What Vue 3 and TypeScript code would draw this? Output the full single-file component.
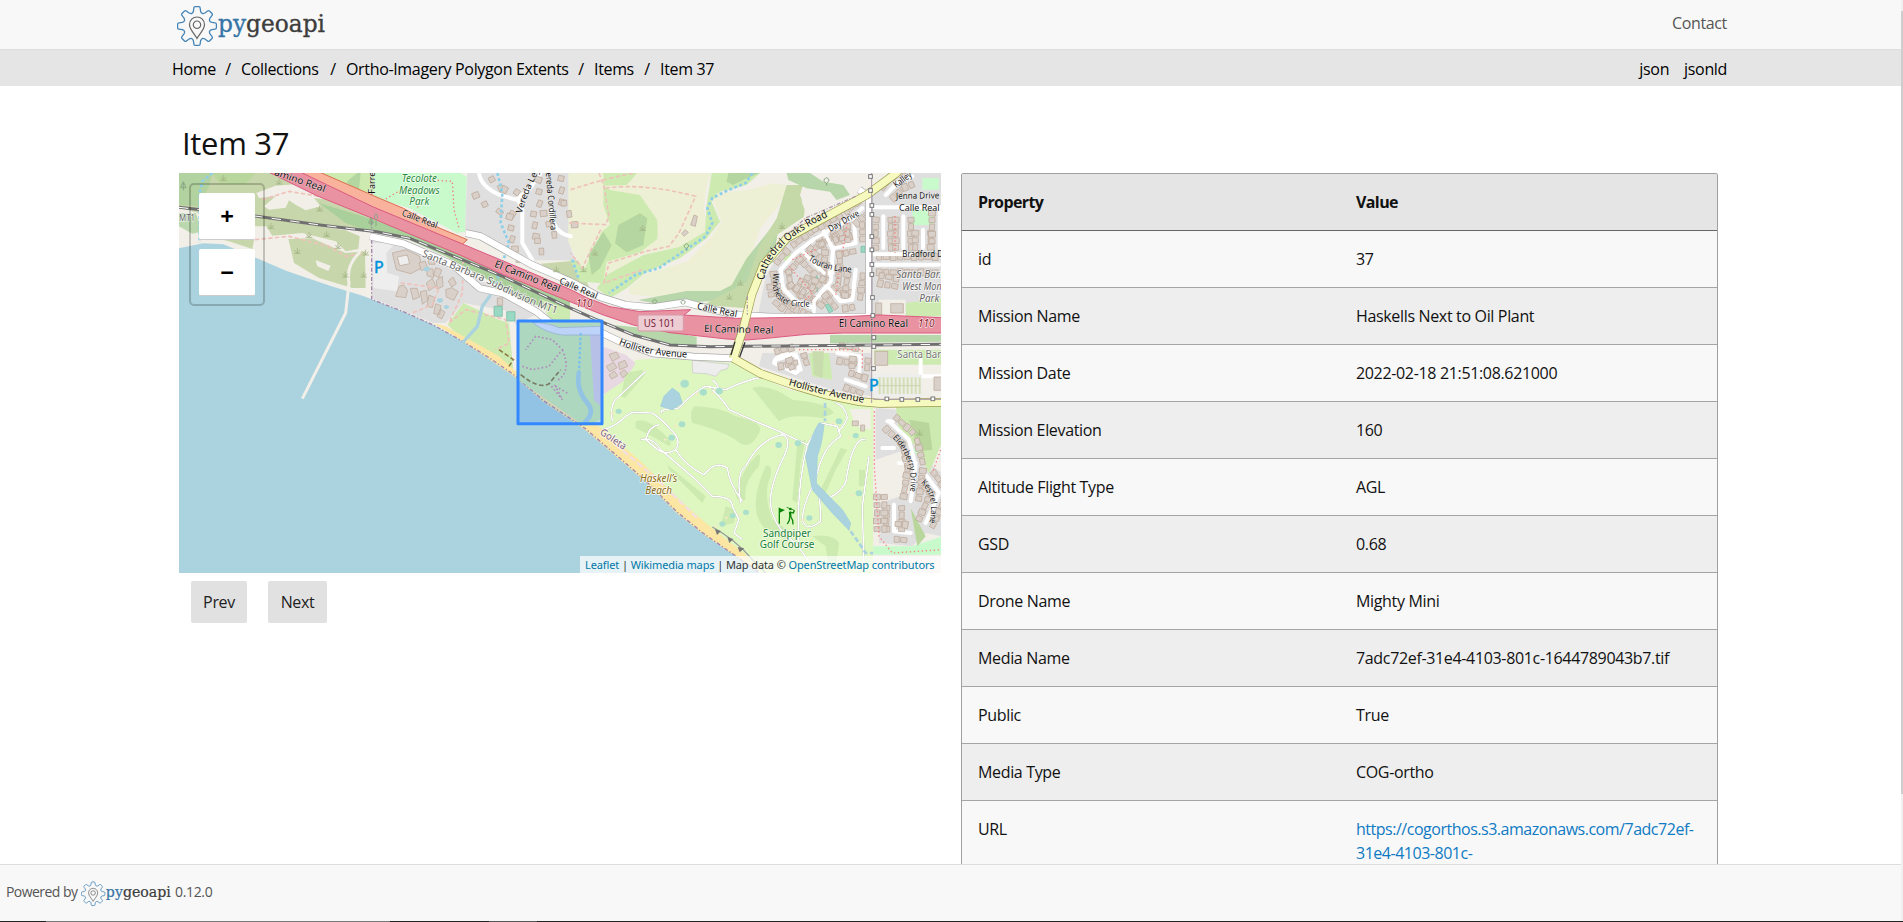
<script setup lang="ts">
interface Row { name: string; value: string; link?: boolean }
interface Label { d: string; text: string; size: number; len: number; cls: string }
interface House { x: number; y: number; a: number; w: number; h: number }

const crumbs = [
  { text: 'Home', cls: 'c-home' },
  { text: 'Collections', cls: 'c-coll' },
  { text: 'Ortho-Imagery Polygon Extents', cls: 'c-name' },
  { text: 'Items', cls: 'c-items' },
  { text: 'Item 37', cls: 'c-item' },
]

const rows: Row[] = [
  { name: 'id', value: '37' },
  { name: 'Mission Name', value: 'Haskells Next to Oil Plant' },
  { name: 'Mission Date', value: '2022-02-18 21:51:08.621000' },
  { name: 'Mission Elevation', value: '160' },
  { name: 'Altitude Flight Type', value: 'AGL' },
  { name: 'GSD', value: '0.68' },
  { name: 'Drone Name', value: 'Mighty Mini' },
  { name: 'Media Name', value: '7adc72ef-31e4-4103-801c-1644789043b7.tif' },
  { name: 'Public', value: 'True' },
  { name: 'Media Type', value: 'COG-ortho' },
  { name: 'URL', value: 'https://cogorthos.s3.amazonaws.com/7adc72ef-31e4-4103-801c-', link: true },
]

// Gear outline with eight teeth, centred on the origin
function gear(): string {
  const pts: string[] = []
  for (let i = 0; i < 8; i++) {
    const base = (i * Math.PI) / 4
    const at = (r: number, o: number) =>
      `${(r * Math.cos(base + o)).toFixed(2)} ${(r * Math.sin(base + o)).toFixed(2)}`
    pts.push(`${i ? 'L' : 'M'}${at(15.2, -0.24)}L${at(18.4, -0.17)}Q${at(19.5, -0.16)} ${at(19.5, -0.09)}L${at(19.5, 0.09)}Q${at(19.5, 0.16)} ${at(18.4, 0.17)}L${at(15.2, 0.24)}Q${at(12.2, 0.39)} ${at(15.2, 0.545)}`)
  }
  return pts.join('') + 'Z'
}
const gearPath = gear()

// Houses on both sides of a street polyline
function street(points: number[][], off = 23, step = 21, size = 15): House[] {
  const out: House[] = []
  for (let i = 0; i < points.length - 1; i++) {
    const [x1, y1] = points[i]
    const [x2, y2] = points[i + 1]
    const len = Math.hypot(x2 - x1, y2 - y1)
    const a = Math.atan2(y2 - y1, x2 - x1)
    for (let t = step / 2; t < len; t += step) {
      for (const side of [-1, 1]) {
        out.push({
          x: x1 + Math.cos(a) * t - Math.sin(a) * off * side,
          y: y1 + Math.sin(a) * t + Math.cos(a) * off * side,
          a: (a * 180) / Math.PI + ((out.length * 7) % 9) - 4,
          w: size + (out.length % 3) * 2,
          h: size + ((out.length + 1) % 3) * 3,
        })
      }
    }
  }
  return out
}
const streets: number[][][] = [
  [[1805, 290], [1850, 240], [1910, 195], [2010, 140], [2050, 105]],
  [[1805, 290], [1812, 345], [1850, 385], [1905, 405]],
  [[1870, 235], [1935, 300], [1960, 300]],
  [[1935, 175], [1962, 230], [1955, 325], [1905, 385]],
  [[1965, 225], [2030, 210], [2025, 140]],
  [[1950, 345], [1985, 385], [2020, 380], [2030, 290]],
  [[2113, 130], [2113, 225]],
  [[2173, 130], [2173, 225]],
  [[2232, 170], [2232, 225]],
  [[2282, 110], [2282, 225]],
  [[2090, 275], [2280, 275]],
  [[2120, 66], [2160, 25], [2200, 10]],
  [[1790, 560], [1850, 545], [1865, 590]],
  [[1975, 540], [2045, 550], [2040, 600]],
  [[2000, 620], [2060, 640]],
  [[2130, 745], [2190, 800], [2210, 880], [2195, 985]],
  [[2145, 995], [2145, 1075], [2195, 1080]],
  [[2240, 905], [2280, 960], [2240, 1050]],
]
const houses: House[] = [
  ...streets.flatMap((s) => street(s)),
  ...street([[1785, 330], [1790, 375], [1840, 412]], 12, 22, 15),
  ...street([[1850, 330], [1885, 350], [1900, 310]], 12, 22, 15),
  ...street([[2095, 318], [2160, 330]], 12, 22, 15),
  ...street([[2105, 960], [2105, 1080]], 11, 24, 15),
]
const westHouses: House[] = [
  ...street([[900, 30], [950, 80], [1020, 95]], 34, 38, 16),
  ...street([[1025, 110], [1035, 200], [1055, 255]], 36, 34, 16),
  ...street([[1110, 0], [1115, 90], [1160, 180]], 34, 36, 16),
]
const streetPaths = streets.map((s) => 'M' + s.map((p) => p.join(' ')).join('L'))

const hatch = Array.from({ length: 11 }, (_, i) => 2102 + i * 12)
const pylons = [
  [2074, 10], [2074, 52], [2078, 97], [2078, 124], [2078, 190], [2078, 230], [2078, 274], [2078, 304],
  [2080, 373], [2081, 427], [2084, 493], [2084, 520], [2083, 586], [2123, 677], [2168, 679], [2216, 679], [2261, 677],
]
const greens = [
  [1517, 632, 13], [1573, 658, 11], [1621, 654, 11], [1319, 715, 9], [1509, 754, 10], [1478, 794, 10],
  [1980, 745, 10], [2030, 788, 9], [1799, 816, 10], [1857, 811, 10], [2040, 961, 10], [1701, 1018, 9],
  [1661, 1028, 9], [1630, 1053, 9], [1891, 1035, 9],
]
const shrubs = [
  [133, 16], [300, 27], [422, 108], [276, 160], [390, 187], [443, 184], [477, 220], [355, 235], [560, 240],
  [499, 306], [554, 306], [1132, 290], [1391, 166], [1248, 240], [1214, 290], [1684, 330], [1651, 372], [1809, 160], [2222, 780],
]

const labels: Label[] = [
  { d: 'M284 6L442 60', text: 'amino Real', size: 30, len: 160, cls: 'road' },
  { d: 'M667 127L787 172', text: 'Calle Real', size: 27, len: 112, cls: 'road' },
  { d: 'M944 281L1160 367', text: 'El Camino Real', size: 31, len: 210, cls: 'road' },
  { d: 'M727 250Q850 300 927 332Q1035 390 1140 426', text: 'Santa Barbara Subdivision MT1', size: 31, len: 440, cls: 'rail' },
  { d: 'M0 143L50 143', text: 'MT1', size: 28, len: 48, cls: 'rail' },
  { d: 'M587 62L587 -20', text: 'Farrell', size: 27, len: 80, cls: 'road' },
  { d: 'M1028 122Q1048 50 1088 -20', text: 'Vereda Leye', size: 27, len: 158, cls: 'road' },
  { d: 'M1099 -14L1115 175', text: 'Vereda Cordillera', size: 27, len: 187, cls: 'road' },
  { d: 'M1139 330L1260 382', text: 'Calle Real', size: 27, len: 122, cls: 'road' },
  { d: 'M1553 408L1680 434', text: 'Calle Real', size: 28, len: 122, cls: 'road' },
  { d: 'M1575 477L1790 482', text: 'El Camino Real', size: 31, len: 208, cls: 'road' },
  { d: 'M1979 462L2200 462', text: 'El Camino Real', size: 31, len: 208, cls: 'road' },
  { d: 'M1191 402L1260 402', text: '110', size: 31, len: 50, cls: 'ref' },
  { d: 'M2217 461L2280 461', text: '110', size: 31, len: 50, cls: 'ref' },
  { d: 'M1319 514Q1400 550 1535 554', text: 'Hollister Avenue', size: 29, len: 210, cls: 'road' },
  { d: 'M1828 636Q1940 669 2065 691', text: 'Hollister Avenue', size: 30, len: 232, cls: 'road' },
  { d: 'M1755 322Q1770 210 1958 126', text: 'Cathedral Oaks Road', size: 32, len: 282, cls: 'road' },
  { d: 'M1954 177L2050 122', text: 'Day Drive', size: 27, len: 102, cls: 'road' },
  { d: 'M1887 262Q1950 300 2030 298', text: 'Touran Lane', size: 27, len: 137, cls: 'road' },
  { d: 'M1783 300Q1763 414 1900 400', text: 'Winchester Circle', size: 26, len: 182, cls: 'road' },
  { d: 'M2151 78L2289 76', text: 'Jenna Drive', size: 27, len: 130, cls: 'road' },
  { d: 'M2160 113L2289 113', text: 'Calle Real', size: 28, len: 122, cls: 'road' },
  { d: 'M2152 45L2206 5', text: 'Kalley', size: 27, len: 60, cls: 'road' },
  { d: 'M2170 251L2310 251', text: 'Bradford D', size: 27, len: 122, cls: 'road' },
  { d: 'M2140 795Q2206 860 2193 962', text: 'Elderberry Drive', size: 26, len: 176, cls: 'road' },
  { d: 'M2225 930Q2270 970 2250 1055', text: 'Kestrel Lane', size: 26, len: 129, cls: 'road' },
  { d: 'M1261 782L1338 834', text: 'Goleta', size: 30, len: 88, cls: 'place' },
]
const plain = [
  { x: 721, y: 26, t: 'Tecolote', len: 106, cls: 'park' },
  { x: 721, y: 62, t: 'Meadows', len: 122, cls: 'park' },
  { x: 721, y: 97, t: 'Park', len: 60, cls: 'park' },
  { x: 2219, y: 316, t: 'Santa Bar.', len: 134, cls: 'sub' },
  { x: 2229, y: 351, t: 'West Mon', len: 118, cls: 'sub' },
  { x: 2251, y: 387, t: 'Park', len: 60, cls: 'sub' },
  { x: 2221, y: 554, t: 'Santa Bar', len: 132, cls: 'grey' },
  { x: 1439, y: 926, t: 'Haskell’s', len: 112, cls: 'beach' },
  { x: 1439, y: 962, t: 'Beach', len: 80, cls: 'beach' },
  { x: 1824, y: 1091, t: 'Sandpiper', len: 144, cls: 'golf' },
  { x: 1824, y: 1126, t: 'Golf Course', len: 164, cls: 'golf' },
]
</script>

<template>
  <div class="page">
    <header class="top">
      <svg class="logo" viewBox="0 0 150 42">
        <g transform="translate(20 21)">
          <path :d="gearPath" class="gear" />
          <path class="pin" d="M0 12.5C-3 7-7.5 3.5-7.5-1.5A7.5 7.5 0 0 1 7.5-1.5C7.5 3.5 3 7 0 12.5Z" />
          <circle class="pin" cy="-1.3" r="3.7" />
        </g>
        <text class="word" x="41" y="27" textLength="107" lengthAdjust="spacingAndGlyphs"><tspan class="py">py</tspan>geoapi</text>
      </svg>
      <a class="contact">Contact</a>
    </header>
    <nav class="crumbs">
      <div class="trail">
        <template v-for="(c, i) in crumbs" :key="c.text">
          <span v-if="i" class="sep">/</span><a :class="c.cls">{{ c.text }}</a>
        </template>
      </div>
      <div class="formats"><a class="f-json">json</a><a class="f-ld">jsonld</a></div>
    </nav>

    <main>
      <h1>Item 37</h1>
      <div class="cols">
        <section class="left">
          <div class="map">
            <svg class="tiles" viewBox="0 0 2289 1200">
              <rect width="2289" height="1200" fill="#aad3df" />
              <path fill="#f2efe9" d="M0 226L73 211L133 214L223 251L323 294L453 338L553 369L578 379L673 416L763 456L853 506L933 556L1003 604L1093 683L1173 738L1218 766L1323 856L1403 926L1493 1016L1573 1081L1663 1141L1743 1200H2289V0H0Z" />
              <!-- scrub, grass and woods in the west -->
              <path fill="#c8d7ab" d="M0 0H290L470 78L590 140L570 174L228 128L228 185L220 228L150 205L85 190L60 120L0 105Z" />
              <path fill="#add19e" opacity=".8" d="M0 0H100L90 40L60 100L0 96ZM0 120H50L70 175L40 182L0 160Z" />
              <path fill="#b9d79c" d="M100 0H230L200 34L120 30Z" />
              <path fill="#f2efe9" d="M232 60L290 38L350 34L440 60L450 80L405 75L425 100L380 112L350 95L330 82L320 104L270 110L255 100L290 70L240 75Z" />
              <path fill="#c8d7ab" d="M228 132L500 172L542 190L538 228L500 235L470 205L370 180L280 188L262 160H228ZM328 198L400 196L500 240L558 235L560 345L520 345L420 315L345 270Z" />
              <path fill="#f2efe9" d="M410 262L455 278L448 294L415 280Z" />
              <path fill="#cdebb0" d="M390 0H585V75L490 48Z" />
              <path fill="#add19e" opacity=".8" d="M505 24L535 0H545L540 50L505 40Z" />
              <path fill="#a9cf9b" d="M420 90L585 140L873 246L1173 376L1173 440L1018 372L800 250L690 200L570 175L500 150Z" />
              <path fill="#c8facc" d="M585 0H845L863 12L858 176L835 180L690 105L585 72Z" />
              <!-- western homes -->
              <path fill="#e0dfdf" d="M865 0H1170V210L1190 262L1062 262L1010 235L858 178Z" />
              <path fill="#c8d7ab" d="M1085 272L1200 262L1240 370L1140 310Z" />
              <path fill="#e0dfdf" d="M578 185L650 215L770 250L850 290L990 370L1080 420L1010 455L990 415L853 390L800 450L763 450L578 375Z" />
              <path fill="#eeeeee" d="M580 210L650 210L622 240L625 300L660 310L655 355L583 345Z" />
              <path fill="#cdebb0" d="M853 390L960 440L990 450L1003 595L853 500L805 455ZM1090 380L1173 410L1173 470L1110 440Z" />
              <g class="house big">
                <path d="M640 240L680 230L722 250L728 285L695 302L652 290Z" /><path fill="#eee" d="M655 252L685 246L692 272L662 278Z" />
                <path d="M660 340l14-4 12 16-6 22-30-4zM694 346l20 0 8 26-20 8zM724 356l18-4 4 30-16 12zM750 366l18 8-8 30-16-4zM770 392l16 6-4 26-18-2zM784 408l14 10-10 20-14-8zM742 330l18-14 10 22-20 16zM772 322l18-12 2 30-18 8zM808 324l14-12 10 20-14 10zM800 350l18-6 20 12-14 26-22-10zM720 270l18-6 10 24-22 4zM744 286l18 2 2 26-20-6zM770 284l18 6-8 24-16-8zM748 262l20 0 0 12-18 0zM955 375l16 0 0 22-16 0z" />
              </g>
              <g fill="#aad3df"><ellipse cx="743" cy="288" rx="10" ry="7" /><ellipse cx="783" cy="382" rx="9" ry="7" /><ellipse cx="802" cy="402" rx="8" ry="6" /></g>
              <g fill="#99d9c4" stroke="#6fb89f" stroke-width="2"><path d="M945 400h25v30h-25zM983 416h25v28h-25z" /></g>
              <!-- northern meadows -->
              <g transform="translate(1143 -24)">
                <path fill="#eef0d5" d="M25 24H455L440 60L430 130L445 190L380 240L240 270L130 350L90 330L60 300L25 230Z" />
                <path fill="#cdebb0" d="M130 24H232L200 60L250 80L290 150L295 220L240 262L140 290L130 355L60 350L28 280L75 310L125 200L150 180L130 120Z" />
                <path fill="#eef0d5" d="M128 62L200 60L270 75L405 95L375 185L330 235L290 255L295 170L240 90L150 75Z" />
                <path fill="#cdebb0" d="M455 24H500L600 24L560 60L480 80L455 110L480 170L440 220L360 280L260 320L200 370L150 400L110 370L140 330L250 270L360 245L435 200L440 120Z" />
                <path fill="#b5d6a0" d="M175 180L240 145L262 160L250 240L200 262L165 235ZM85 270L130 200L155 240L120 310L95 330ZM505 24H600L560 40L520 60L500 50Z" />
                <path fill="#eef0d5" d="M470 85L560 75L640 55L676 60L680 80L650 130L600 190L575 270L540 365L490 378L380 378L280 395L210 388L205 370L260 325L380 290L450 220L485 170L460 110Z" />
                <path fill="#add19e" opacity=".85" d="M235 405L380 378L480 378L515 360L560 280L600 230L640 180L655 190L640 290L585 330L570 380L500 405L420 410L280 415Z" />
                <path fill="#c5d9a8" d="M680 60L740 60L725 110L740 150L650 210L610 280L585 350L560 430L430 420L560 350L600 240L650 160Z" />
                <path fill="#f2efe9" d="M740 24H880L920 60L910 80L730 165L735 130L720 90Z" />
                <path fill="#add19e" opacity=".85" d="M680 24H750L790 50L850 60L870 90L830 105L810 80L740 70L685 45ZM160 480L260 490L410 515L410 540L320 540L220 505ZM810 510L1143 510V530L810 535Z" />
                <path class="house" d="M402 150l10 4-6 30-14-4zM375 194l10 8-12 12-8-8z" />
              </g>
              <!-- eastern homes -->
              <path fill="#e0dfdf" d="M1740 410L1760 310L1820 210L1930 150L2060 75L2100 30L2130 0H2289V430L1740 425ZM1750 540H2076V670L1960 650L1740 580Z" />
              <path fill="#c8facc" d="M2230 15h50v35h-50zM2200 110h64v46h-64z" />
              <path fill="#cdebb0" d="M2180 390l109 -15v55h-109zM2085 530H2289V575H2085ZM1890 540l60 0 10 80-60-10zM1810 240l20-10 10 30-20 10z" />
              <path fill="#c9dcae" d="M1900 535l35 0 -5 80-25-10z" />
              <path fill="#f2efe9" d="M2100 380h80v50h-80z" />
              <g fill="#99d9c4" stroke="#6fb89f" stroke-width="2"><path d="M1900 327h16v28h-16zM1938 396l12-4 12 22-12 6zM2046 220h12v18h-12z" /><circle cx="1908" cy="316" r="9" /></g>
              <!-- golf course -->
              <path fill="#def6c0" d="M1273 668L1330 610L1370 560L1460 556L1662 570L1740 610L1830 650L2083 700V1200H1743L1663 1125L1573 1050L1450 930L1260 760Z" />
              <path fill="#ededed" stroke="#c9c9c9" stroke-width="2" d="M1540 562l110 12-5 14-20 4-14 18-30-8-40-2z" />
              <path fill="#e8d8e2" d="M1270 520L1340 545L1370 570L1340 620L1272 665Z" />
              <path fill="#cdebb0" d="M1545 700Q1620 700 1670 730Q1760 750 1740 780Q1710 840 1670 800Q1620 770 1540 750Q1530 720 1545 700ZM1720 645Q1770 630 1840 680Q1950 690 1965 720L1930 735Q1830 720 1800 745ZM1370 745Q1400 735 1440 770Q1490 810 1470 820Q1440 800 1370 765ZM1465 875L1580 970L1570 990L1470 890ZM1730 850Q1750 830 1740 880Q1690 930 1700 980Q1670 990 1670 960Q1690 890 1730 850ZM1760 880Q1780 870 1775 910Q1750 960 1780 1040L1840 1080L1820 1100L1760 1070Q1700 1010 1760 880ZM1855 810L1880 800L1865 870L1855 990L1840 980ZM1985 825L2005 830L1970 890L1940 960L1920 960ZM2040 890h18v50h-18zM1900 1090Q1960 1080 1980 1110L1970 1190H1950L1940 1120ZM1340 600l50-10 8 15-60 70-12-5zM1640 1000l30 10-5 40-40 10z" />
              <g class="cart" fill="none">
                <path d="M1300 745Q1290 690 1320 670L1400 595M1273 770Q1310 760 1340 730L1360 718L1420 720Q1450 740 1475 770Q1510 800 1490 830Q1460 850 1430 825L1400 800Q1410 760 1440 755M1450 720Q1430 710 1500 705Q1540 660 1580 640L1640 650Q1700 620 1760 610L1850 640M1600 650Q1640 690 1650 710Q1740 750 1800 775L1885 815L1925 750M1600 620Q1640 660 1590 640M1925 750L1975 760L1985 790Q1930 820 1910 920M1385 800Q1420 790 1445 830L1550 920L1600 970Q1660 970 1660 1000L1680 1040L1665 1080L1690 1100M1490 830Q1520 880 1575 905Q1610 860 1645 885Q1650 930 1690 985M1685 990Q1670 900 1700 880Q1740 800 1810 785Q1840 795 1815 850Q1760 960 1780 1020Q1800 1080 1850 1110L1900 1180M1885 815Q1850 960 1860 1110M2060 800Q2020 790 2000 930Q1960 990 1920 970Q1925 1000 1925 1045Q1880 1080 1870 1040Q1870 1000 1905 930M2070 850L2050 1000L2055 1190M1970 690Q2000 700 2005 735Q1990 770 1975 775" />
              </g>
              <g fill="#aad3df" stroke="#9ccbd9" stroke-width="2">
                <path d="M1445 700L1455 670L1480 645L1500 660L1510 690L1480 710ZM1920 750L1935 755Q1930 810 1915 850L1912 930L1950 970L1990 1010L2015 1050L2010 1072L1960 1020L1900 950L1880 850Q1900 780 1920 750Z" />
              </g>
              <path fill="none" stroke="#aad3df" stroke-width="8" stroke-dasharray="15 8" d="M1938 690V745M2015 1075L2040 1110L2060 1140L2289 1145" />
              <ellipse v-for="(g, i) in greens" :key="'g' + i" :cx="g[0]" :cy="g[1]" :rx="g[2]" :ry="g[2] - 1" fill="#aae0cb" />
              <g fill="#f5e9c6"><ellipse v-for="(g, i) in greens" :key="'b' + i" :cx="g[0] - 19" :cy="g[1] + 6" rx="5" ry="3" /></g>
              <!-- beach -->
              <path fill="#fce6a4" d="M763 450L800 460L880 505L960 550L1003 588L1130 680L1260 760L1380 860L1490 970L1580 1050L1700 1145L1740 1195L1663 1145L1573 1084L1493 1020L1403 930L1323 860L1218 770L1093 687L1003 608L853 506Z" />
              <path fill="none" stroke="#a686ae" stroke-width="4" stroke-dasharray="12 6 4 6" d="M578 60V379L673 416L763 456L853 506L933 556L1003 604L1093 683L1218 766L1323 856L1403 926L1493 1016L1573 1081L1743 1200" />
              <path fill="none" stroke="#f2dfe0" stroke-width="7" stroke-dasharray="20 8" d="M1310 815L1430 915L1560 1040" />
              <path fill="none" stroke="#999" stroke-width="4" d="M1600 1062Q1670 1100 1720 1160L1760 1200" /><path fill="#777" d="M1608 1068l18 6-12 12zM1645 1092l18 6-12 12zM1676 1122l20 4-14 12z" />
              <!-- south-east -->
              <path fill="#f2efe9" d="M2083 700L2289 690V1150H2083Z" />
              <path fill="#e0dfdf" d="M2090 705L2150 710L2200 790L2250 870L2289 900V1090L2240 1080L2200 1120L2100 1110L2105 990L2190 960L2180 830L2090 860Z" />
              <path fill="#cdebb0" d="M2150 700H2289V810L2250 900L2210 820L2160 770Z" /><path fill="#b9d79c" d="M2190 740L2250 750L2260 830L2220 835Z" />
              <path fill="#c8facc" d="M2083 1120L2200 1120L2289 1090V1145H2083ZM2190 820L2230 840L2235 870Z" />
              <path fill="#b9d79c" d="M2195 1005L2240 1090L2215 1120Z" />
              <path fill="#f2efe9" d="M2110 880Q2180 870 2180 940Q2170 990 2120 960Z" />
              <path fill="#f2efe9" d="M2012 708L2075 708L2075 770L2030 760Z" />
              <!-- minor streets and houses -->
              <path v-for="(d, i) in streetPaths" :key="'s' + i" :d="d" class="minor" />
              <path class="minor" d="M900 0Q905 40 960 65L1010 80L1050 50L1085 0M1015 75L1030 110L1030 210L1060 260M1115 110Q1120 180 1175 190M2085 103H2289M2085 244H2200M2289 610H2225V560M1785 570Q1790 540 1850 545Q1870 590 1850 600ZM2110 825H2145M2160 870H2210M2125 745H2142" />
              <g class="house">
                <rect v-for="(h, i) in houses" :key="'h' + i" :x="-h.w / 2" :y="-h.h / 2" :width="h.w" :height="h.h" :transform="`translate(${h.x} ${h.y}) rotate(${h.a})`" />
                <rect v-for="(h, i) in westHouses" :key="'w' + i" :x="-h.w / 2" :y="-h.h / 2" :width="h.w" :height="h.h - 2" :transform="`translate(${h.x} ${h.y}) rotate(${h.a + 20})`" />
                <path d="M2135 392h38v28h-38zM2090 390h18v34h-18zM2088 535h38v42h-38zM2265 612h24v40h-24zM1290 545l22-8 10 16-22 12zM1282 580l22-12 10 16-22 12zM1318 570l20-8 8 18-24 10zM1290 606l16-12 10 14-18 10zM1322 600l14-10 10 12-14 12zM2020 744l18 0 0 14-18 0zM2045 756l12 0 0 18-12 0z" />
              </g>
              <path class="minor mid-white" d="M1805 290L1850 240L1910 195L2010 140M1805 290L1812 345L1850 385L1905 405M1870 235L1935 300M1935 175L1962 230L1955 325L1905 385V425M1965 225L2030 210M1950 345L1985 385L2020 380L2030 290M2090 244H2200" />
              <g fill="none" class="foot">
                <path d="M1175 50Q1300 10 1370 0M1280 45Q1400 30 1550 70L1500 180L1470 220L1400 235L1290 270L1275 330L1390 290M1260 0L1275 40L1290 130L1280 155L1170 150M1265 170L1210 285L1175 240" />
                <path d="M250 80L330 55L450 75L470 95M228 200L330 190L450 220L500 250L560 240M665 330L780 345L760 395L700 420M853 240L850 360L810 450L860 410L980 440L990 510L950 530" />
              </g>
              <g fill="none" stroke="#f57f7f" stroke-width="4" stroke-dasharray="4 8">
                <path d="M740 20L820 25L825 110L840 165M600 90L650 60L690 40L720 110M2086 715V880L2100 1090L2140 1140L2289 1130M2289 820L2260 900M1830 280L1900 360L1860 400M1840 260L1910 230M1980 290L1970 370M2005 150L1990 240M1860 530H2050V590M2090 610H2220M2148 130V240" />
              </g>
              <path fill="none" stroke="#8ecfe8" stroke-width="8" stroke-dasharray="9 7" d="M1720 0L1700 30L1640 55L1600 75L1585 105L1600 150L1580 190L1520 230L1440 285L1370 305L1290 360M955 0L970 60L965 150L990 210L960 300L945 360M100 0L70 25L62 60V210M1180 260L1200 320" />
              <path fill="none" stroke="#aad3df" stroke-width="10" d="M935 365L910 400L895 460L850 510" />
              <path fill="none" stroke="#f2efe9" stroke-width="9" d="M578 190Q550 200 540 240Q500 280 510 330L500 420L370 677" />
              <!-- white roads -->
              <g fill="none" stroke-linejoin="round">
                <path class="wc" d="M860 180L905 190L980 232L1060 276L1173 325L1263 372L1340 396L1420 403L1520 388L1583 405L1670 426L1790 432H2070V70L2040 50" />
                <path class="wc" d="M573 190L672 211L823 276L903 346L973 361L1073 416L1123 456L1253 472L1323 506L1423 541L1543 551L1663 556" />
                <path class="wf" d="M860 180L905 190L980 232L1060 276L1173 325L1263 372L1340 396L1420 403L1520 388L1583 405L1670 426L1790 432H2070V70L2040 50" />
                <path class="wf" d="M573 190L672 211L823 276L903 346L973 361L1073 416L1123 456L1253 472L1323 506L1423 541L1543 551L1663 556" />
              </g>
              <!-- railway -->
              <path fill="none" stroke="#707070" stroke-width="9" d="M0 103L228 129L423 156L593 176L693 196L803 241L973 311L1143 391L1243 436L1363 486L1473 516L1593 521L2289 514" />
              <path fill="none" stroke="#fff" stroke-width="3" stroke-dasharray="28 28" d="M0 103L228 129L423 156L593 176L693 196L803 241L973 311L1143 391L1243 436L1363 486L1473 516L1593 521L2289 514" />
              <!-- motorway -->
              <path fill="#f9b29c" stroke="#d96f4c" stroke-width="3" d="M330 -10H405L583 68L673 106L783 166L865 200L850 214L573 105Z" />
              <path fill="#e892a2" stroke="#dc5a80" stroke-width="3" d="M250 -12H345L583 102L848 212L1023 285L1173 349L1223 374L1293 401L1383 416L1535 410L1515 426L1673 436L1993 431L2103 426L2289 434V480H1993L1883 484L1763 496L1703 501L1643 498L1473 479L1363 456L1273 426L1173 386L973 305L843 246L573 133L413 68Z" />
              <!-- yellow roads -->
              <g fill="none" stroke-linejoin="round">
                <path class="yc" d="M1663 556L1693 466L1718 366L1753 276L1823 196L1933 136L2063 66L2150 2L2170 -20M1663 556L1743 601L1843 636L1943 666L2043 686L2103 691L2289 688" />
                <path class="yf" d="M1663 556L1693 466L1718 366L1753 276L1823 196L1933 136L2063 66L2150 2L2170 -20M1663 556L1743 601L1843 636L1943 666L2043 686L2103 691L2289 688" />
              </g>
              <path fill="none" stroke="#333" stroke-width="4" d="M1668 506L1656 546M1698 508L1682 552" />
              <path fill="none" stroke="#a89aa8" stroke-width="3" d="M2078 0V690M2083 679H2289" />
              <path fill="none" stroke="#af9da9" stroke-width="4" stroke-dasharray="12 5 3 5" d="M2030 70L1880 135L1820 190M1705 370V425" />
              <g fill="#fff" stroke="#777" stroke-width="3"><rect v-for="(p, i) in pylons" :key="'p' + i" :x="p[0] - 5" :y="p[1] - 5" width="11" height="11" /></g>
              <rect x="2084" y="605" width="145" height="65" fill="#eee" />
              <path v-for="x in hatch" :key="x" :d="`M${x} 613V663`" stroke="#d5dfb1" stroke-width="6" />
              <path d="M2095 638H2225" stroke="#c9d3b4" stroke-width="3" />
              <!-- shrub marks -->
              <path v-for="(s, i) in shrubs" :key="'m' + i" :d="`M${s[0] - 10} ${s[1] + 6}H${s[0] + 10}M${s[0]} ${s[1] + 6}V${s[1] - 10}M${s[0]} ${s[1] + 6}l-8 -10M${s[0]} ${s[1] + 6}l8 -10`" stroke="#a3b584" stroke-width="2.5" fill="none" />
              <g fill="none" stroke="#8aa883" stroke-width="3"><path d="M13 52V30M13 26l-8 18h16zM576 160V138M576 134l-7 16h14zM591 160V140q10-8 0-18q-10 10 0 18M1520 226q-10-10 3-14q12 6 0 14v8M1940 30q-12-10 3-16q14 6 0 16v8M1425 392q-10-10 3-12q12 4 0 12M1510 394q-10-10 3-12q12 4 0 12" /></g>
              <!-- selected extent contents -->
              <path fill="#cdebb0" d="M1021 448H1265V740L1218 760L1020 622Z" />
              <path fill="#d9d0e3" d="M1232 475H1265V700L1245 680Z" />
              <path fill="#e0e6f5" stroke="#a9b3cc" stroke-width="2" d="M1060 448Q1110 450 1140 464L1265 460V486H1150Q1100 480 1060 448Z" />
              <path fill="none" stroke="#aad3df" stroke-width="14" d="M1200 596Q1190 650 1225 690Q1250 720 1215 750" />
              <path fill="none" stroke="#d28cab" stroke-width="5" stroke-dasharray="5 7" d="M1030 580L1060 590L1110 580L1150 530L1120 500L1070 490L1040 530M1110 630L1150 680L1130 640L1165 660M1150 530Q1180 600 1130 625" />
              <path fill="none" stroke="#8a7a40" stroke-width="5" stroke-dasharray="14 7" d="M1025 605Q1080 650 1110 632L1145 590M960 530L1003 560L990 580" />
              <path fill="none" stroke="#8ecfe8" stroke-width="7" stroke-dasharray="8 6" d="M1205 480L1200 596" />
              <rect x="1017" y="444" width="252" height="308" fill="#3388ff" fill-opacity=".2" stroke="#3388ff" stroke-width="9" stroke-linejoin="round" />
              <!-- labels -->
              <template v-for="(l, i) in labels" :key="'l' + i">
                <path :id="'lp' + i" :d="l.d" fill="none" />
                <text :class="['lab', l.cls]" :font-size="l.size" :textLength="l.len" lengthAdjust="spacingAndGlyphs"><textPath :href="'#lp' + i" :textLength="l.len" lengthAdjust="spacingAndGlyphs">{{ l.text }}</textPath></text>
              </template>
              <text v-for="p in plain" :key="p.t + p.y" :class="['lab', 'mid', p.cls]" :x="p.x" :y="p.y" font-size="30" :textLength="p.len" lengthAdjust="spacingAndGlyphs">{{ p.t }}</text>
              <rect x="1377" y="426" width="136" height="48" rx="5" fill="#edccd3" stroke="#d79aaa" stroke-width="3" />
              <text class="lab shield" x="1394" y="462" font-size="32" textLength="94" lengthAdjust="spacingAndGlyphs">US 101</text>
              <text class="lab parking" x="585" y="299" font-size="48">P</text>
              <text class="lab parking" x="2070" y="655" font-size="48">P</text>
              <g fill="none" stroke="#0a850a" stroke-width="4">
                <path d="M1801 1004V1052" /><path fill="#0a850a" stroke="none" d="M1801 1005l17 6-17 9z" />
                <path stroke-width="7" d="M1833 1016L1834 1032" /><path stroke-width="4" d="M1832 1032L1831 1042L1825 1053M1836 1032L1841 1042L1842 1054M1834 1018L1843 1020L1846 1012" /><path stroke-width="2.5" d="M1846 1012L1823 1003" /><circle cx="1834" cy="1008" r="4" fill="#0a850a" stroke="none" />
              </g>
            </svg>
            <div class="zoom"><b>+</b><b>−</b></div>
            <div class="attr"><a>Leaflet</a> | <a>Wikimedia maps</a> | Map data © <a>OpenStreetMap contributors</a></div>
          </div>
          <div class="pager"><a class="prev">Prev</a><a class="next">Next</a></div>
        </section>
        <div class="table">
          <div class="row head"><span>Property</span><span>Value</span></div>
          <div v-for="r in rows" :key="r.name" class="row"><span>{{ r.name }}</span><span :class="{ link: r.link }">{{ r.value }}</span></div>
        </div>
      </div>
    </main>

    <footer>
      <span class="pw">Powered by</span>
      <svg class="logo small" viewBox="0 0 150 42">
        <g transform="translate(20 21)">
          <path :d="gearPath" class="gear" />
          <path class="pin" d="M0 12.5C-3 7-7.5 3.5-7.5-1.5A7.5 7.5 0 0 1 7.5-1.5C7.5 3.5 3 7 0 12.5Z" />
          <circle class="pin" cy="-1.3" r="3.7" />
        </g>
        <text class="word" x="41" y="27" textLength="107" lengthAdjust="spacingAndGlyphs"><tspan class="py">py</tspan>geoapi</text>
      </svg>
      <span class="ver">0.12.0</span>
      <div class="edge"></div>
    </footer>
    <div class="track"><div class="thumb"></div></div>
  </div>
</template>

<style>
body { margin: 0; overflow: hidden; }
</style>

<style scoped>
* { box-sizing: border-box; }
.page { position: relative; width: 1903px; height: 922px; overflow: hidden; background: #fff; color: #111; font: 16px/24px "Open Sans", "Noto Sans", sans-serif; letter-spacing: -0.34px; display: flex; flex-direction: column; }
.top { height: 50px; flex: none; background: #f8f8f8; border-bottom: 1px solid #ddd; padding: 5px 176px 0 177px; display: flex; justify-content: space-between; }
.logo { width: 150px; height: 42px; flex: none; letter-spacing: 0; }
.gear { fill: none; stroke: #4584b6; stroke-width: 1.3; }
.pin { fill: none; stroke: #666; stroke-width: 1.2; }
.word { font-family: "DejaVu Serif", serif; font-size: 25px; fill: #3d3d3d; stroke: #3d3d3d; stroke-width: 0.35px; }
.py { fill: #3674a6; stroke: #3674a6; }
.contact { color: #555; margin-top: 6px; }
.crumbs { height: 36px; flex: none; background: #e5e5e5; padding: 7px 176px 0 172px; display: flex; justify-content: space-between; color: #000; }
.trail { display: flex; }
.trail a { white-space: nowrap; }
.c-home { width: 43px; }
.c-coll { width: 79px; }
.c-name { width: 222px; }
.c-items { width: 40px; }
.sep { width: 26px; text-align: center; }
.formats { display: flex; gap: 15px; }
main { flex: 1; min-height: 0; overflow: hidden; padding: 35px 0 0 179px; }
h1 { margin: 0 0 8px 3px; font-size: 31px; line-height: 44px; font-weight: 400; letter-spacing: -0.3px; }
.cols { display: flex; gap: 19px; align-items: flex-start; }
.left { width: 763px; flex: none; }
.map { position: relative; width: 762px; height: 400px; overflow: hidden; }
.tiles { display: block; width: 763px; height: 400px; letter-spacing: 0; }
.zoom { position: absolute; left: 10px; top: 10px; width: 76px; height: 123px; border: 2px solid rgba(0,0,0,.2); border-radius: 5px; padding: 8px; display: flex; flex-direction: column; gap: 9px; }
.zoom b { height: 47px; background: #fff; border-radius: 2px; border-bottom: 1px solid #ccc; font-size: 24px; line-height: 46px; text-align: center; color: #000; letter-spacing: 0; }
.attr { position: absolute; right: 0; bottom: 0; height: 17px; padding: 0 0 0 5px; width: 361px; white-space: nowrap; background: rgba(255,255,255,.7); font: 11px/17px "Noto Sans", sans-serif; letter-spacing: -0.11px; color: #333; }
.attr a { color: #0078a8; }
.pager { display: flex; gap: 21px; margin: 8px 0 0 12px; }
.pager a { height: 42px; background: #e1e1e1; border-radius: 2px; line-height: 43px; text-align: center; color: #222; }
.prev { width: 56px; }
.next { width: 59px; }
.table { width: 757px; border: 1px solid #a0a0a0; border-radius: 2px; }
.row { display: flex; min-height: 57px; border-bottom: 1px solid #a5a5a5; background: #f8f8f8; padding: 16px; }
.row:nth-child(odd) { background: #eee; }
.row.head { background: #e5e5e5; border-color: #666; font-weight: 700; letter-spacing: -0.6px; }
.row span:first-child { width: 378px; flex: none; }
.row .link { color: #0f7ac4; letter-spacing: -0.48px; }
footer { position: relative; flex: none; height: 58px; border-top: 1px solid #ddd; background: #f8f8f8; display: flex; padding: 16px 0 0 6px; font-size: 14px; line-height: 22px; color: #555; }
.pw { width: 75px; letter-spacing: -0.55px; }
.small { width: 91px; height: 25.5px; }
.ver { margin-left: 3px; }
.edge { position: absolute; left: 0; right: 0; bottom: 0; height: 1px; background: linear-gradient(90deg, #222 46px, #777 46px 390px, #222 390px 489px, #555 489px 537px, #222 537px); }
.track { position: absolute; right: 0; top: 0; width: 2px; height: 921px; background: #f0f0f0; padding-top: 11px; }
.thumb { height: 783px; background: #cdcdcd; }
.minor { fill: none; stroke: #fff; stroke-width: 12; stroke-linecap: round; stroke-linejoin: round; }
.mid-white { stroke-width: 10; }
.house { fill: #d9d0c9; stroke: #c0aea0; stroke-width: 2.5; }
.cart { stroke: #fff; stroke-width: 5; filter: drop-shadow(0 0 0.6px #888); }
.foot { stroke: #eec2bb; stroke-width: 5; stroke-dasharray: 13 7; }
.wc { stroke: #aaa; stroke-width: 23; }
.wf { stroke: #fff; stroke-width: 19; }
.yc { stroke: #9a9a4a; stroke-width: 26; }
.yf { stroke: #f7fabf; stroke-width: 22; }
.lab { font-family: "Noto Sans", sans-serif; paint-order: stroke; stroke: rgba(255,255,255,.75); stroke-width: 5px; stroke-linejoin: round; fill: #111; }
.road { stroke-width: 2px; }
.rail { fill: #666; }
.ref { fill: #8a1528; font-style: italic; stroke: rgba(255,255,255,.8); stroke-width: 4px; }
.mid { text-anchor: middle; }
.park { fill: #2b8b3b; font-style: italic; }
.sub { fill: #666; font-style: italic; }
.grey { fill: #777; }
.beach { fill: #8a6d14; font-style: italic; }
.golf { fill: #168032; }
.place { fill: #7b5d85; }
.shield { fill: #7a2540; stroke: none; }
.parking { fill: #0092da; stroke: #0092da; stroke-width: 1.5px; }
</style>
